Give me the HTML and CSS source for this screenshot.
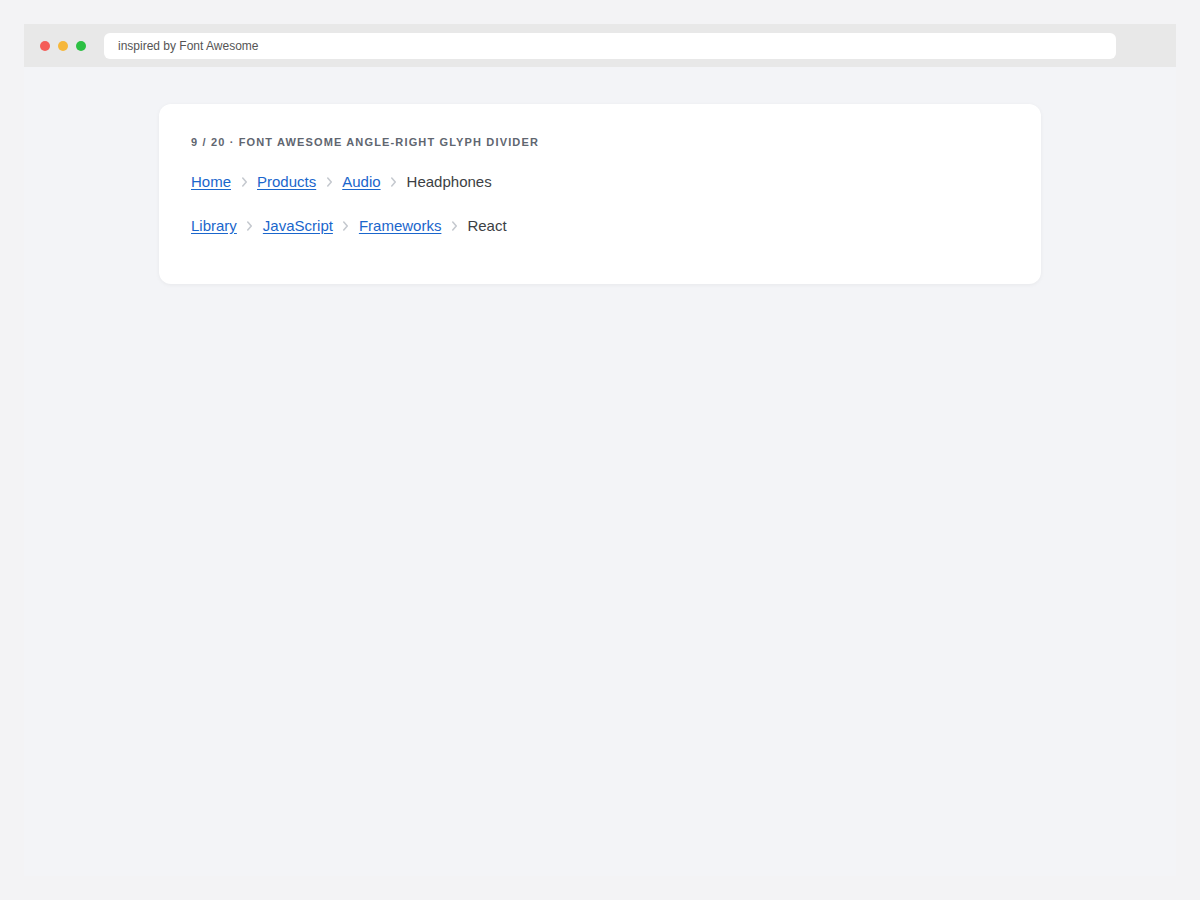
FILE: index.html
```html
<!DOCTYPE html>
<html lang="en">
<head>
    <meta charset="UTF-8">
    <meta name="viewport" content="width=device-width, initial-scale=1.0">
    <title>Breadcrumb dividers</title>
    <link rel="stylesheet" href="styles.css">
</head>
<body>
    <div class="window">
        <div class="titlebar">
            <span class="dot red"></span>
            <span class="dot yellow"></span>
            <span class="dot green"></span>
            <div class="address">inspired by Font Awesome</div>
        </div>

        <div class="page">
            <div class="card">
                <div class="eyebrow">9 / 20 &middot; Font Awesome angle-right glyph divider</div>

                <nav class="crumbs" aria-label="Breadcrumb">
                    <a href="#">Home</a>
                    <svg class="sep" viewBox="0 0 8 12"><path d="M2 1.5 L6 6 L2 10.5"/></svg>
                    <a href="#">Products</a>
                    <svg class="sep" viewBox="0 0 8 12"><path d="M2 1.5 L6 6 L2 10.5"/></svg>
                    <a href="#">Audio</a>
                    <svg class="sep" viewBox="0 0 8 12"><path d="M2 1.5 L6 6 L2 10.5"/></svg>
                    <span class="current">Headphones</span>
                </nav>

                <nav class="crumbs" aria-label="Breadcrumb">
                    <a href="#">Library</a>
                    <svg class="sep" viewBox="0 0 8 12"><path d="M2 1.5 L6 6 L2 10.5"/></svg>
                    <a href="#">JavaScript</a>
                    <svg class="sep" viewBox="0 0 8 12"><path d="M2 1.5 L6 6 L2 10.5"/></svg>
                    <a href="#">Frameworks</a>
                    <svg class="sep" viewBox="0 0 8 12"><path d="M2 1.5 L6 6 L2 10.5"/></svg>
                    <span class="current">React</span>
                </nav>
            </div>
        </div>
    </div>
</body>
</html>
```

FILE: styles.css
```css
body {
    margin: 0;
    padding: 24px;
    background-color: #f3f3f5;
    font-family: "Liberation Sans", Arial, sans-serif;
}
.window {
    height: 852px;
    background-color: #f3f4f7;
    display: flex;
    flex-direction: column;
}
.titlebar {
    height: 43px;
    background-color: #e8e8e8;
    display: flex;
    align-items: center;
    padding: 0 16px;
    gap: 8px;
}
.dot {
    width: 10px;
    height: 10px;
    border-radius: 50%;
}
.red { background-color: #f45d58; }
.yellow { background-color: #f6b73a; }
.green { background-color: #2cc043; }
.address {
    flex: 1;
    margin-left: 10px;
    margin-right: 44px;
    height: 26px;
    line-height: 26px;
    background-color: white;
    border-radius: 6px;
    padding: 0 14px;
    font-size: 12px;
    color: #555;
}
.page {
    padding: 37px 0;
    display: flex;
    justify-content: center;
}
.card {
    width: 882px;
    box-sizing: border-box;
    padding: 32px 32px 46px;
    background-color: white;
    border-radius: 12px;
    box-shadow: 0 1px 4px rgba(0, 0, 0, 0.05);
}
.eyebrow {
    font-size: 11px;
    line-height: 12px;
    font-weight: bold;
    letter-spacing: 1.15px;
    text-transform: uppercase;
    color: #5f6670;
    margin-bottom: 22px;
}
.crumbs {
    display: flex;
    align-items: center;
    gap: 9.5px;
    font-size: 15px;
    line-height: 24px;
}
.crumbs + .crumbs {
    margin-top: 20px;
}
.crumbs a {
    color: #1a66cc;
    text-decoration: underline;
    text-underline-offset: 2px;
}
.current {
    color: #3c3f44;
}
.sep {
    width: 7px;
    height: 12px;
    fill: none;
    stroke: #c5c9cf;
    stroke-width: 1.8;
    stroke-linecap: round;
    stroke-linejoin: round;
}
```
